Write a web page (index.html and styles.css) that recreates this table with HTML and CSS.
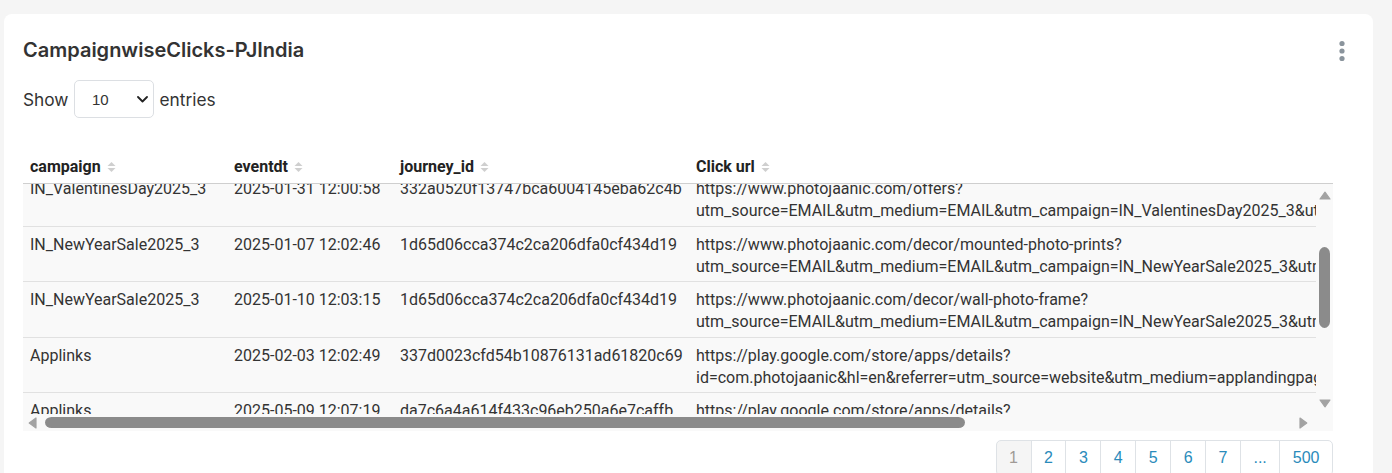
FILE: index.html
```html
<!DOCTYPE html>
<html lang="en">
<head>
<meta charset="utf-8">
<title>CampaignwiseClicks-PJIndia</title>
<link rel="stylesheet" href="styles.css">
</head>
<body>
<div class="card">
  <button class="kebab" type="button" aria-label="Menu">
    <svg width="6" height="22" viewBox="0 0 6 22"><circle cx="3" cy="3.5" r="2.6"/><circle cx="3" cy="11" r="2.6"/><circle cx="3" cy="18.5" r="2.6"/></svg>
  </button>
  <h2 class="title">CampaignwiseClicks-PJIndia</h2>
  <div class="length">
    <span>Show</span>
    <span class="select-wrap">
      <select class="select"><option>10</option><option>25</option><option>50</option><option>100</option></select>
      <svg class="chev" width="11" height="7" viewBox="0 0 11 7"><path d="M1 1l4.5 4.5L10 1" fill="none" stroke="#222" stroke-width="1.8" stroke-linecap="round" stroke-linejoin="round"/></svg>
    </span>
    <span>entries</span>
  </div>

  <div class="dt-scroll">
    <div class="dt-head" id="dtHead">
      <table class="grid">
        <colgroup><col class="c1"><col class="c2"><col class="c3"><col class="c4"></colgroup>
        <thead>
          <tr>
            <th>campaign <svg class="sort" width="9" height="12" viewBox="0 0 9 12"><path d="M0.5 5L4.5 1l4 4z M0.5 7l4 4 4-4z"/></svg></th>
            <th>eventdt <svg class="sort" width="9" height="12" viewBox="0 0 9 12"><path d="M0.5 5L4.5 1l4 4z M0.5 7l4 4 4-4z"/></svg></th>
            <th>journey_id <svg class="sort" width="9" height="12" viewBox="0 0 9 12"><path d="M0.5 5L4.5 1l4 4z M0.5 7l4 4 4-4z"/></svg></th>
            <th>Click url <svg class="sort" width="9" height="12" viewBox="0 0 9 12"><path d="M0.5 5L4.5 1l4 4z M0.5 7l4 4 4-4z"/></svg></th>
          </tr>
        </thead>
      </table>
    </div>
    <div class="dt-body" id="dtBody">
      <table class="grid">
        <colgroup><col class="c1"><col class="c2"><col class="c3"><col class="c4"></colgroup>
        <tbody>
          <tr><td>IN_NewYearSale2025_3</td><td>2025-01-05 12:01:37</td><td>1d65d06cca374c2ca206dfa0cf434d19</td><td>https://www.photojaanic.com/photo-books?<wbr>utm_source=EMAIL&amp;utm_medium=EMAIL&amp;utm_campaign=IN_NewYearSale2025_3&amp;utm_content=books_block&amp;utm_term=newyear_sale</td></tr>
          <tr><td>IN_ValentinesDay2025_3</td><td>2025-01-31 11:58:20</td><td>332a0520f13747bca6004145eba62c4b</td><td>https://www.photojaanic.com/gifts/photo-mugs?<wbr>utm_source=EMAIL&amp;utm_medium=EMAIL&amp;utm_campaign=IN_ValentinesDay2025_3&amp;utm_content=gifts_block&amp;utm_term=valentines</td></tr>
          <tr><td>IN_ValentinesDay2025_3</td><td>2025-01-31 12:00:58</td><td>332a0520f13747bca6004145eba62c4b</td><td>https://www.photojaanic.com/offers?<wbr>utm_source=EMAIL&amp;utm_medium=EMAIL&amp;utm_campaign=IN_ValentinesDay2025_3&amp;utm_content=offers_banner&amp;utm_term=valentines</td></tr>
          <tr><td>IN_NewYearSale2025_3</td><td>2025-01-07 12:02:46</td><td>1d65d06cca374c2ca206dfa0cf434d19</td><td>https://www.photojaanic.com/decor/mounted-photo-prints?<wbr>utm_source=EMAIL&amp;utm_medium=EMAIL&amp;utm_campaign=IN_NewYearSale2025_3&amp;utm_content=decor_block&amp;utm_term=newyear_sale</td></tr>
          <tr><td>IN_NewYearSale2025_3</td><td>2025-01-10 12:03:15</td><td>1d65d06cca374c2ca206dfa0cf434d19</td><td>https://www.photojaanic.com/decor/wall-photo-frame?<wbr>utm_source=EMAIL&amp;utm_medium=EMAIL&amp;utm_campaign=IN_NewYearSale2025_3&amp;utm_content=decor_block&amp;utm_term=newyear_sale</td></tr>
          <tr><td>Applinks</td><td>2025-02-03 12:02:49</td><td>337d0023cfd54b10876131ad61820c69</td><td>https://play.google.com/store/apps/details?<wbr>id=com.photojaanic&amp;hl=en&amp;referrer=utm_source=website&amp;utm_medium=applandingpage&amp;utm_campaign=applinks&amp;utm_term=app</td></tr>
          <tr><td>Applinks</td><td>2025-05-09 12:07:19</td><td>da7c6a4a614f433c96eb250a6e7caffb</td><td>https://play.google.com/store/apps/details?<wbr>id=com.photojaanic&amp;hl=en&amp;referrer=utm_source=website&amp;utm_medium=applandingpage&amp;utm_campaign=applinks&amp;utm_term=app</td></tr>
          <tr><td>IN_NewYearSale2025_3</td><td>2025-01-08 12:05:02</td><td>5b8e1f0a2c7d4e93a1f6b0c4d2e8f715</td><td>https://www.photojaanic.com/photo-prints?<wbr>utm_source=EMAIL&amp;utm_medium=EMAIL&amp;utm_campaign=IN_NewYearSale2025_3&amp;utm_content=prints_block&amp;utm_term=newyear_sale</td></tr>
          <tr><td>Applinks</td><td>2025-03-14 12:09:41</td><td>9c41e7b2d05a4f86b3e2a7c19d0f6e58</td><td>https://play.google.com/store/apps/details?<wbr>id=com.photojaanic&amp;hl=en&amp;referrer=utm_source=website&amp;utm_medium=applandingpage&amp;utm_campaign=applinks&amp;utm_term=app</td></tr>
          <tr><td>IN_ValentinesDay2025_3</td><td>2025-02-02 12:04:26</td><td>332a0520f13747bca6004145eba62c4b</td><td>https://www.photojaanic.com/photo-books?<wbr>utm_source=EMAIL&amp;utm_medium=EMAIL&amp;utm_campaign=IN_ValentinesDay2025_3&amp;utm_content=books_block&amp;utm_term=valentines</td></tr>
        </tbody>
      </table>
    </div>
    <div class="vbar">
      <span class="sb-btn up"><svg width="12" height="9" viewBox="0 0 12 9"><path d="M6 1.2L11 8H1z" stroke-linejoin="round"/></svg></span>
      <span class="sb-track" id="vTrack"><span class="sb-thumb v" id="vThumb"></span></span>
      <span class="sb-btn down"><svg width="12" height="9" viewBox="0 0 12 9"><path d="M1 1h10L6 7.8z" stroke-linejoin="round"/></svg></span>
    </div>
    <div class="hbar">
      <span class="sb-btn left"><svg width="9" height="12" viewBox="0 0 9 12"><path d="M8 1v10L1.2 6z" stroke-linejoin="round"/></svg></span>
      <span class="sb-track" id="hTrack"><span class="sb-thumb h" id="hThumb"></span></span>
      <span class="sb-btn right"><svg width="9" height="12" viewBox="0 0 9 12"><path d="M1 1l6.8 5L1 11z" stroke-linejoin="round"/></svg></span>
    </div>
    <div class="sb-corner"></div>
  </div>

  <nav class="pager">
    <span class="page current">1</span>
    <a class="page" href="#">2</a>
    <a class="page" href="#">3</a>
    <a class="page" href="#">4</a>
    <a class="page" href="#">5</a>
    <a class="page" href="#">6</a>
    <a class="page" href="#">7</a>
    <span class="page ellipsis">...</span>
    <a class="page" href="#">500</a>
  </nav>
</div>
<script src="script.js"></script>
</body>
</html>
```

FILE: styles.css
```css
html, body {
  margin: 0;
  background: #f5f5f5;
}
body {
  font-family: Inter, "Noto Sans", sans-serif;
  color: #333;
}
.card {
  position: relative;
  background: #fff;
  border-radius: 8px;
  margin: 14px 19px 0 4px;
  padding: 24px 40px 24px 19px;
}
.kebab {
  position: absolute;
  top: 26px;
  right: 28px;
  width: 6px;
  height: 22px;
  padding: 0;
  border: 0;
  background: none;
  display: flex;
}
.kebab svg { fill: #8a949c; }
.title {
  margin: 0;
  font-size: 20px;
  line-height: 24px;
  font-weight: 600;
  color: #333;
}
.length {
  margin-top: 18px;
  display: flex;
  align-items: center;
  gap: 5.5px;
  font-size: 17.3px;
  color: #333;
}
.select-wrap {
  position: relative;
  display: flex;
}
.select {
  appearance: none;
  -webkit-appearance: none;
  width: 80px;
  height: 38px;
  border: 1px solid #dcdfe3;
  border-radius: 5px;
  background: #fff;
  padding: 0 0 0 17px;
  font-family: "Liberation Sans", Arial, sans-serif;
  font-size: 15px;
  color: #333;
}
.chev {
  position: absolute;
  right: 6px;
  top: 16px;
  pointer-events: none;
}
.dt-scroll {
  margin-top: 30px;
  display: grid;
  grid-template-columns: minmax(0, 1fr) 17px;
  grid-template-rows: auto 230px 17px;
  font-family: Roboto, "Liberation Sans", sans-serif;
  font-size: 16px;
  background: #f9f9f9;
}
.dt-head {
  grid-column: 1 / 3;
  overflow: hidden;
  background: #fff;
  border-bottom: 1px solid #cfcfcf;
}
.grid {
  table-layout: fixed;
  width: 1769px;
  border-collapse: collapse;
  border-spacing: 0;
}
.c1 { width: 204px; }
.c2 { width: 166px; }
.c3 { width: 296px; }
.c4 { width: 1103px; }
.grid th {
  text-align: left;
  font-weight: 700;
  color: #222;
  padding: 8px 11px 5px;
  line-height: 22px;
  white-space: nowrap;
}
.sort {
  fill: #cfcfcf;
  margin-left: 2px;
  vertical-align: -1px;
}
.dt-body {
  overflow: auto;
  scrollbar-width: none;
  background: #f9f9f9;
}
.grid td {
  padding: 7px 11px 3px;
  line-height: 22.25px;
  color: #333;
  vertical-align: top;
  border-top: 1px solid #e1e1e1;
}
.grid td:not(:last-child) { white-space: nowrap; }
.vbar, .hbar {
  display: flex;
  background: #f9f9f9;
}
.vbar { flex-direction: column; }
.sb-btn {
  flex: 0 0 17px;
  width: 17px;
  height: 17px;
  display: flex;
  fill: #a3a3a3;
  stroke: #a3a3a3;
  stroke-width: 1.2;
  box-sizing: border-box;
}
.sb-btn.up { align-items: flex-end; justify-content: center; padding-bottom: 1px; }
.sb-btn.down { align-items: flex-start; justify-content: center; padding-top: 2px; }
.sb-btn.left { align-items: center; justify-content: flex-end; padding-right: 3px; }
.sb-btn.right { align-items: center; justify-content: flex-start; }
.sb-track {
  position: relative;
  flex: 1 1 auto;
}
.sb-thumb {
  position: absolute;
  background: #8b8b8b;
  background-clip: padding-box;
  border-style: solid;
  border-color: transparent;
  border-radius: 9px;
}
.sb-thumb.v {
  left: 0;
  right: 0;
  border-width: 2px 3px;
}
.sb-thumb.h {
  top: 0;
  bottom: 0;
  border-width: 3px 2px;
}
.sb-corner { background: #f9f9f9; }
.pager {
  margin-top: 9px;
  display: flex;
  justify-content: flex-end;
  font-family: "Liberation Sans", Arial, sans-serif;
  font-size: 16px;
}
.page {
  display: block;
  padding: 6px 12.5px;
  line-height: 22px;
  border: 1px solid #dee2e6;
  margin-left: -1px;
  color: #2a8bbb;
  text-decoration: none;
  background: #fff;
}
.page:first-child {
  margin-left: 0;
  border-radius: 5px 0 0 5px;
}
.page:last-child { border-radius: 0 5px 5px 0; }
.page.current {
  background: #f5f5f5;
  color: #a09a96;
}
```

FILE: script.js
```js
var body = document.getElementById('dtBody');
var head = document.getElementById('dtHead');
var vTrack = document.getElementById('vTrack');
var hTrack = document.getElementById('hTrack');
var vThumb = document.getElementById('vThumb');
var hThumb = document.getElementById('hThumb');

function syncBars() {
  var ch = body.clientHeight, sh = body.scrollHeight;
  var cw = body.clientWidth, sw = body.scrollWidth;
  var vl = vTrack.clientHeight, hl = hTrack.clientWidth;
  var vlen = Math.max(20, vl * ch / sh);
  var hlen = Math.max(20, hl * cw / sw);
  var vtop = sh > ch ? body.scrollTop / (sh - ch) * (vl - vlen) : 0;
  var hleft = sw > cw ? body.scrollLeft / (sw - cw) * (hl - hlen) : 0;
  vThumb.style.height = vlen + 'px';
  vThumb.style.top = vtop + 'px';
  hThumb.style.width = hlen + 'px';
  hThumb.style.left = hleft + 'px';
  head.scrollLeft = body.scrollLeft;
}

body.scrollTop = 124.5;
body.scrollLeft = 4;
syncBars();
body.addEventListener('scroll', syncBars);
```
